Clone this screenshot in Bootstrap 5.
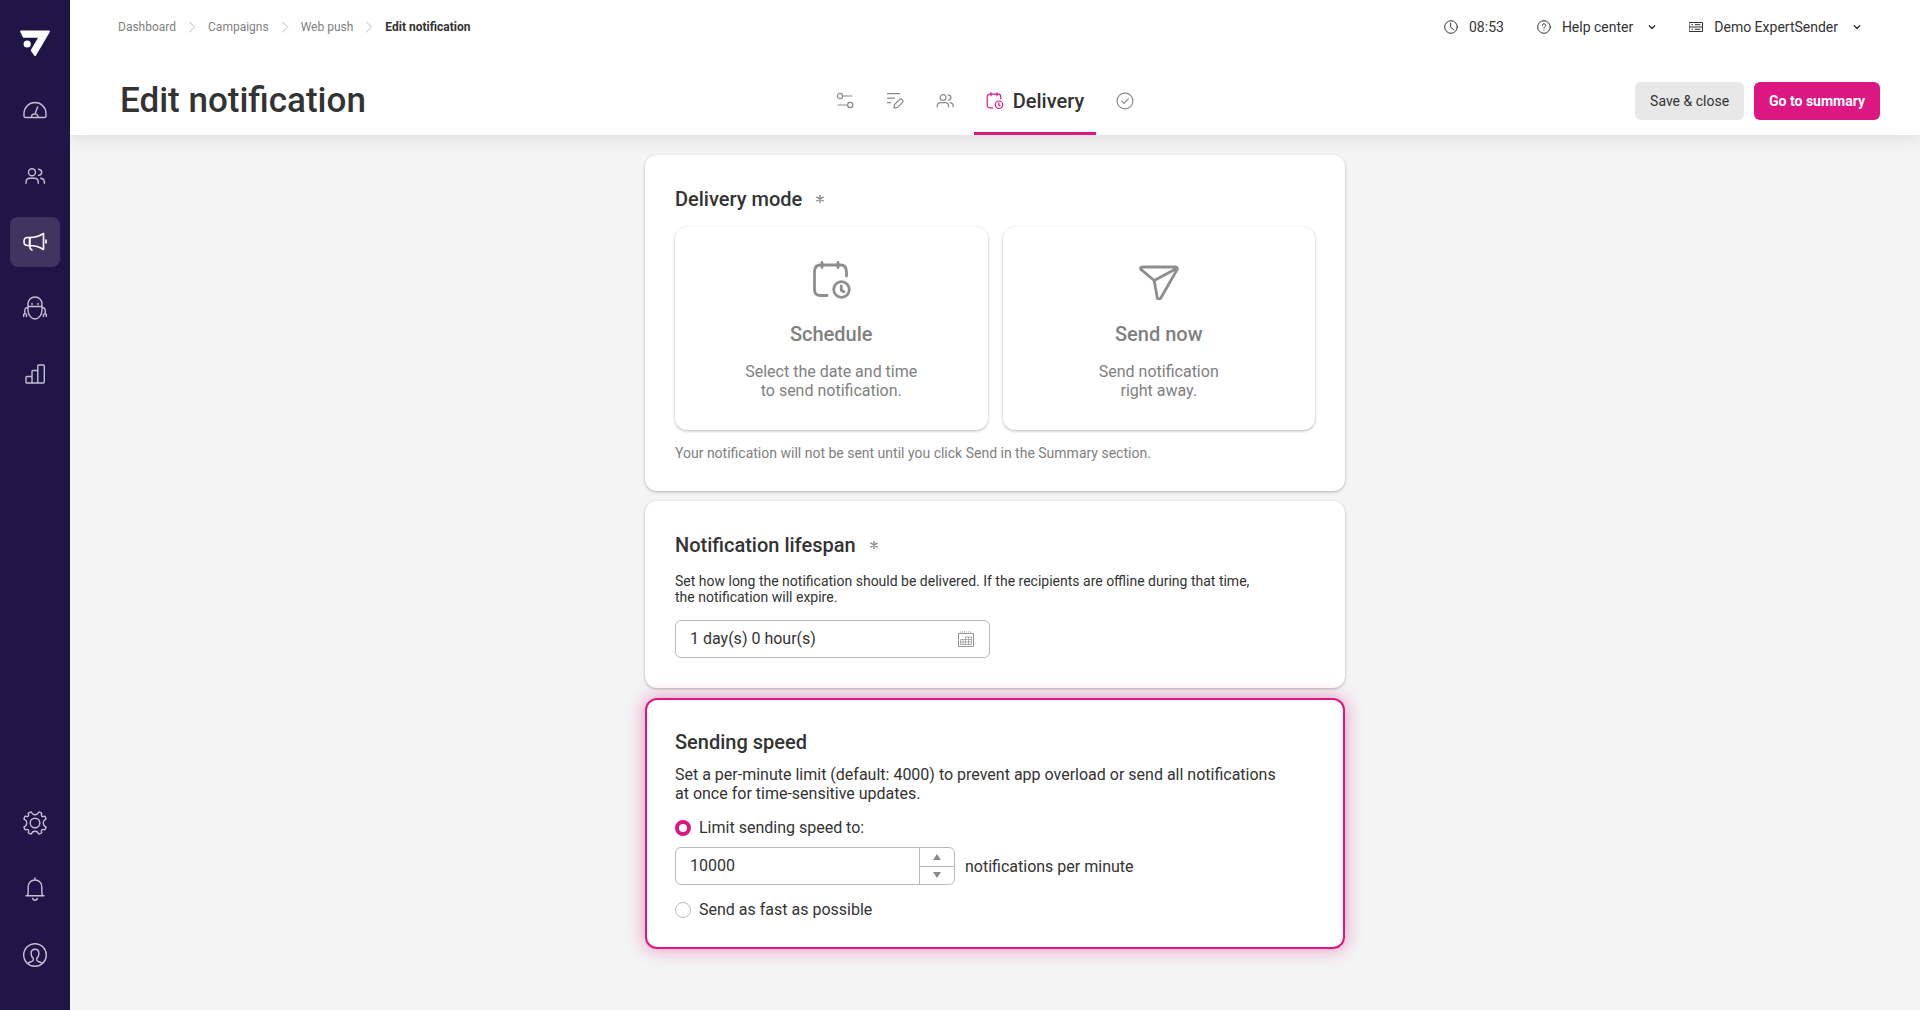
<!DOCTYPE html>
<html lang="en">
<head>
<meta charset="utf-8">
<meta name="viewport" content="width=device-width, initial-scale=1">
<title>Edit notification</title>
<link href="https://cdn.jsdelivr.net/npm/bootstrap@5.3.0/dist/css/bootstrap.min.css" rel="stylesheet">
<style>
  :root { --ink: #333; --soft: #808080; --pink: #dc1782; --navy: #201547; }
  body { font-family: Roboto, "Liberation Sans", sans-serif; font-size: 16px; line-height: 19px; color: var(--ink); background: #f4f4f4; }
  svg { display: block; flex: none; fill: none; stroke: currentColor; stroke-linecap: round; stroke-linejoin: round; }

  .side-rail { width: 70px; background: var(--navy); padding: 30px 10px; position: sticky; top: 0; }
  .side-rail .brand { margin: 0 10px 28px; }
  .brand svg { fill: #fff; stroke: none; }
  .rail-link { width: 50px; height: 50px; border-radius: 8px; color: #c4c0d4; stroke-width: 1.4; }
  .rail-link.active { background: #3f3560; color: #fff; stroke-width: 1.6; }
  .rail-list { gap: 16px; }

  .page-head { background: #fff; box-shadow: 0 0 20px rgba(0,0,0,.12); }
  .top-line { padding: 17px 59px 0 48px; }
  .crumbs { font-size: 12px; line-height: 20px; gap: 13px; }
  .crumbs a { color: var(--soft); text-decoration: none; }
  .crumbs svg { stroke: #bbb; }
  .tools { gap: 33px; }
  .tools .btn, .tools .clock { font-size: 14px; line-height: 20px; padding: 0; border: 0; color: var(--ink); gap: 11px; }
  .tools .chev { margin-left: 4px; stroke-width: 1.4; }
  .head-row { display: grid; grid-template-columns: 1fr auto 1fr; padding: 30px 40px 0 50px; height: 98px; }
  .page-title { font-size: 35px; line-height: 40px; font-weight: 500; margin: 0; }
  .steps { margin-right: 30px; gap: 8px; }
  .steps a { padding: 0 12px; color: #8a8a8a; stroke-width: 1.2; text-decoration: none; border: 0 solid transparent; border-width: 3px 0; gap: 9px; }
  .steps a.active { border-bottom-color: var(--pink); color: var(--pink); }
  .steps .step-name { color: var(--ink); font-size: 20px; line-height: 28px; font-weight: 500; }
  .actions { gap: 10px; }
  .act { font-size: 14px; line-height: 20px; padding: 9px 15px; border: 0; border-radius: 6px; }
  .act-plain { background: #e8e8e8; color: var(--ink); }
  .act-main { background: var(--pink); color: #fff; font-weight: 700; }

  .form-col { width: 100%; max-width: 700px; margin: 20px auto; gap: 10px; }
  .panel { background: #fff; border-radius: 12px; padding: 30px; box-shadow: 0 1px 3px rgba(0,0,0,.28); }
  .panel.focused { border: 2px solid var(--pink); padding: 28px 28px 27px; box-shadow: 0 0 18px rgba(220,23,130,.45); }
  .panel h2 { font-size: 20px; line-height: 28px; font-weight: 500; margin: 0 0 14px; gap: 14px; }
  .panel.focused h2 { margin-bottom: 9px; }
  .panel p { margin-bottom: 15px; }
  .req { color: #8e8e8e; stroke-width: 1.5; }
  .mode { background: #fff; border: 0; border-radius: 12px; padding: 33px 20px 30px; color: var(--soft); box-shadow: 0 1px 3px rgba(0,0,0,.3); }
  .mode svg { color: #8e8e8e; stroke-width: 2.8; }
  .mode strong { font-size: 20px; line-height: 28px; font-weight: 500; margin: 20px 0 14px; }
  .modes { gap: 15px; margin-bottom: 15px; }
  .hint { font-size: 14px; line-height: 16px; }
  .muted { color: var(--soft); }
  .box { border: 1px solid #b8b8b8; border-radius: 6px; height: 38px; background: #fff; overflow: hidden; }
  .box .form-control { border: 0; border-radius: 0; padding: 0 0 0 14px; font-size: 16px; color: var(--ink); box-shadow: none; background: none; }
  .lifespan { width: 315px; padding-right: 15px; }
  .lifespan svg { color: #999; stroke-linecap: butt; stroke-linejoin: miter; }
  .limit { width: 280px; }
  .limit input { appearance: textfield; -moz-appearance: textfield; }
  .limit input::-webkit-inner-spin-button { display: none; }
  .limit-row { gap: 10px; margin: 9px 0 15px; }
  .spin { width: 35px; border-left: 1px solid #b8b8b8; }
  .spin button { border: 0; background: none; padding: 0; color: #8a8a8a; }
  .spin button + button { border-top: 1px solid #b8b8b8; }
  .spin svg { fill: currentColor; stroke: none; }
  .choice { gap: 8px; line-height: 20px; }
  .choice .form-check-input { width: 16px; height: 16px; margin: 0; border: 1px solid #bbb; background: #fff; }
  .choice .form-check-input:checked { border: 4px solid var(--pink); background: #fff; }
</style>
</head>
<body>
<div class="d-flex">
  <nav class="side-rail vh-100 d-flex flex-column flex-shrink-0" aria-label="Main">
    <a href="#" class="brand" aria-label="Home">
      <svg width="30" height="27" viewBox="0 0 30 27"><path d="M1 .5h28c.9 0 1.200.7.8 1.400L16 25.500c-.5.9-1.300.9-1.800 0L11.300 21.500c-.5-.9-.4-1.500 0-2.200L18 7.800H4.500c-.8 0-1.300-.3-1.700-.9L.3 2C-.1 1.200.2.5 1 .5z"/><circle cx="7.200" cy="14" r="3.600"/></svg>
    </a>
    <div class="rail-list d-flex flex-column">
      <a href="#" class="rail-link d-flex align-items-center justify-content-center" aria-label="Dashboard">
        <svg width="24" height="24" viewBox="0 0 24 24"><path d="M2.500 19.500c-1 0-1.500-.5-1.500-1.500v-2.500a11 11 0 0 1 22 0V18c0 1-.5 1.500-1.500 1.500zM8.500 19.200a3.300 3.300 0 0 1 6.600 0M12 16l2.600-7"/></svg>
      </a>
      <a href="#" class="rail-link d-flex align-items-center justify-content-center" aria-label="Audience">
        <svg width="24" height="24" viewBox="0 0 24 24"><circle cx="9" cy="8.300" r="3.500"/><path d="M3 19.200v-1c0-2.600 1.700-4 4-4h4.300c2.300 0 4 1.400 4 4v1M15.500 5.200c2 .2 3.200 1.500 3.200 3.100s-1.200 2.900-3.200 3.100M17.700 14.200c2.300.4 3.700 1.800 3.700 4v1"/></svg>
      </a>
      <a href="#" class="rail-link active d-flex align-items-center justify-content-center" aria-label="Campaigns">
        <svg width="24" height="24" viewBox="0 0 24 24"><path d="M7 7.500H4.500C2.300 7.500 1 9.200 1 11.500s1.300 4 3.500 4H7M7 7.500c5 0 9.500-1.400 13.500-4v16c-4-2.600-8.500-4-13.500-4zM6.500 7.500v8c0 1.800.8 3.500 2.500 4.600M23 10v3"/></svg>
      </a>
      <a href="#" class="rail-link d-flex align-items-center justify-content-center" aria-label="Automation">
        <svg width="24" height="24" viewBox="0 0 24 24"><path d="M5 10.500V7.800C5 3.800 8 1 12 1s7 2.800 7 6.800v2.700zM5 10.500v3.500c0 4.500 3 9 7 9s7-4.500 7-9v-3.500M5 11.500c-2 0-3.200 1.200-3.200 3.200v2.300M19 11.500c2 0 3.200 1.200 3.200 3.200v2.300M.7 20.500v-2l1.100-1.300L3.500 18.500v2M23.300 20.500v-2l-1.100-1.300-1.700 1.300v2M9 7.500v1M15 7.500v1"/></svg>
      </a>
      <a href="#" class="rail-link d-flex align-items-center justify-content-center" aria-label="Reports">
        <svg width="24" height="24" viewBox="0 0 24 24"><path d="M3 20.500v-5c0-.6.400-1 1-1h5v6.500H4c-.6 0-1-.2-1-.5zM9 21V9.500c0-.6.400-1 1-1h4.800V21zM14.800 21V4c0-.6.400-1 1-1h4.500c.6 0 1 .4 1 1v16c0 .6-.4 1-1 1z"/></svg>
      </a>
    </div>
    <div class="rail-list d-flex flex-column mt-auto">
      <a href="#" class="rail-link d-flex align-items-center justify-content-center" aria-label="Settings">
        <svg width="24" height="24" viewBox="0 0 24 24"><circle cx="12" cy="12" r="4.800"/><path d="M9.300 2.700 8.700 1.500C8.500 1 8 .9 7.400 1.100L5.800 1.800c-.6.300-.7.800-.4 1.400.7 1.500-.7 3-2.200 2.200-.6-.3-1.100-.2-1.400.4l-.7 1.600c-.2.600 0 1.100.7 1.300 2.600 1 2.600 5.600 0 6.600-.7.200-.9.700-.7 1.300l.7 1.600c.3.600.8.700 1.400.4 1.500-.8 2.900.7 2.200 2.200-.3.600-.2 1.100.4 1.400l1.600.7c.6.200 1.100 0 1.300-.7 1-2.600 5.600-2.600 6.600 0 .2.700.7.900 1.300.7l1.600-.7c.6-.3.700-.8.400-1.400-.7-1.500.7-3 2.200-2.200.6.300 1.100.2 1.400-.4l.7-1.600c.2-.6 0-1.100-.7-1.300-2.600-1-2.600-5.600 0-6.600.7-.2.900-.7.700-1.300l-.7-1.600c-.3-.6-.8-.7-1.400-.4-1.500.8-2.900-.7-2.200-2.200.3-.6.200-1.100-.4-1.400l-1.600-.7c-.6-.2-1.100 0-1.300.7-1 2.400-4.800 2.600-6 .9z"/></svg>
      </a>
      <a href="#" class="rail-link d-flex align-items-center justify-content-center" aria-label="Alerts">
        <svg width="24" height="24" viewBox="0 0 24 24"><path d="M3 18.700h18M4.500 18.700c.5-1 .7-3 .7-5.700v-3C5.200 6 8 3 12 3s6.800 3 6.800 7v3c0 2.700.2 4.700.7 5.700M12 3V1M9.700 21.500c.3 1.200 1.200 1.700 2.300 1.700s2-.5 2.300-1.700"/></svg>
      </a>
      <a href="#" class="rail-link d-flex align-items-center justify-content-center" aria-label="Profile">
        <svg width="24" height="24" viewBox="0 0 24 24"><circle cx="12" cy="12" r="11.300"/><path d="M4.500 20.300c1-.9 2.700-1.300 4.500-1.900.9-.3 1.300-.9 1.300-1.800v-1.300c-1.200-.9-2.200-2.500-2.200-4.700 0-2.700 1.500-4.300 3.900-4.300s3.900 1.600 3.900 4.300c0 2.200-1 3.800-2.200 4.700v1.300c0 .9.400 1.500 1.300 1.800 1.800.6 3.500 1 4.500 1.900"/></svg>
      </a>
    </div>
  </nav>

  <div class="flex-grow-1">
    <header class="page-head">
      <div class="top-line d-flex justify-content-between">
        <nav class="crumbs d-flex align-items-center" aria-label="Breadcrumb">
          <a href="#">Dashboard</a>
          <svg width="6" height="12" viewBox="0 0 6 12"><path d="M.5 1 5.500 6l-5 5"/></svg>
          <a href="#">Campaigns</a>
          <svg width="6" height="12" viewBox="0 0 6 12"><path d="M.5 1 5.500 6l-5 5"/></svg>
          <a href="#">Web push</a>
          <svg width="6" height="12" viewBox="0 0 6 12"><path d="M.5 1 5.500 6l-5 5"/></svg>
          <span class="fw-bold" aria-current="page">Edit notification</span>
        </nav>
        <div class="tools d-flex align-items-center">
          <span class="clock d-flex align-items-center">
            <svg width="14" height="14" viewBox="0 0 14 14"><circle cx="7" cy="7" r="6.300"/><path d="M6.700 3v4.300l3 2.500"/></svg>08:53
          </span>
          <button type="button" class="btn d-flex align-items-center">
            <svg width="14" height="14" viewBox="0 0 14 14"><circle cx="7" cy="7" r="6.300"/><path d="M5.300 5.500c0-1 .7-1.600 1.700-1.600s1.700.6 1.700 1.500c0 1.200-1.700 1.200-1.700 2.600M7 10v.2"/></svg>Help center
            <svg class="chev" width="8" height="8" viewBox="0 0 8 8"><path d="m1.300 2.700 2.700 2.700 2.700-2.700"/></svg>
          </button>
          <button type="button" class="btn d-flex align-items-center">
            <svg width="14" height="14" viewBox="0 0 14 14"><path d="M.5 2.500h13v9H.5zM.5 7h13M3 4.700h.7M6.300 4.700H11M3 9.300h.7M6.300 9.300H11"/></svg>Demo ExpertSender
            <svg class="chev" width="8" height="8" viewBox="0 0 8 8"><path d="m1.300 2.700 2.700 2.700 2.700-2.700"/></svg>
          </button>
        </div>
      </div>
      <div class="head-row">
        <h1 class="page-title align-self-center">Edit notification</h1>
        <nav class="steps d-flex" aria-label="Steps">
          <a href="#" class="d-flex align-items-center" aria-label="Settings"><svg width="18" height="18" viewBox="0 0 18 18"><circle cx="4" cy="4" r="2.600"/><path d="M6.800 4H16M2 13h9.500"/><circle cx="14.200" cy="13" r="2.600"/></svg></a>
          <a href="#" class="d-flex align-items-center" aria-label="Content"><svg width="18" height="18" viewBox="0 0 18 18"><path d="M1.500 1.700h12M1.500 6.200h7M1.500 10.700h3M8.500 12.500l4.700-4.700c1-1 2.200-1 3.100-.2s.9 2.100 0 3.100l-4.600 4.700-3.700.7z"/></svg></a>
          <a href="#" class="d-flex align-items-center" aria-label="Recipients"><svg width="18" height="18" viewBox="0 0 18 18"><circle cx="7" cy="5.600" r="2.900"/><path d="M1.200 15v-1c0-2.200 1.500-3.400 3.400-3.400h4.600c1.900 0 3.400 1.200 3.400 3.400v1M12.300 3.200c1.600.1 2.700 1.100 2.700 2.400s-1 2.300-2.500 2.500M14.200 10.700c1.800.3 3 1.500 3 3.300v1"/></svg></a>
          <a href="#" class="active d-flex align-items-center" aria-current="step"><svg width="18" height="18" viewBox="0 0 18 18"><path d="M6.500 15.800H4c-1.700 0-2.800-1-2.800-2.800V5c0-1.700 1.100-2.800 2.800-2.800h8c1.700 0 2.800 1.100 2.800 2.800v2M5 .8v3M11 .8v3"/><circle cx="13" cy="12.700" r="3.700"/><path d="M12.800 10.900v2l1.300.8"/></svg><span class="step-name">Delivery</span></a>
          <a href="#" class="d-flex align-items-center" aria-label="Summary"><svg width="18" height="18" viewBox="0 0 18 18"><circle cx="9" cy="9" r="7.900"/><path d="m5.800 9.200 2.200 2.200 4.300-4.600"/></svg></a>
        </nav>
        <div class="actions d-flex align-items-center justify-content-end">
          <button type="button" class="btn act act-plain">Save &amp; close</button>
          <button type="button" class="btn act act-main">Go to summary</button>
        </div>
      </div>
    </header>

    <main class="form-col d-flex flex-column">
      <section class="panel">
        <h2 class="d-flex align-items-center">Delivery mode <svg class="req" width="8" height="8" viewBox="0 0 8 8" role="img" aria-label="required"><path d="M4 .3v7.400M.8 2.200l6.400 3.600M7.200 2.200.8 5.800"/></svg></h2>
        <div class="modes d-flex">
          <button type="button" class="mode flex-fill w-50 d-flex flex-column align-items-center">
            <svg width="40" height="40" viewBox="0 0 40 40"><path d="M16 35.500H9.500C5.500 35.500 3.500 33.500 3.500 29.500V12C3.500 7.500 5.500 5 9.500 5h20c4 0 6 2.500 6 7v4M11 2.500v5M27 2.500v5"/><circle cx="30.500" cy="29.500" r="7.800"/><path d="M30.300 26v4.200l2.600 1.600"/></svg>
            <strong>Schedule</strong>
            <span>Select the date and time<br>to send notification.</span>
          </button>
          <button type="button" class="mode flex-fill w-50 d-flex flex-column align-items-center">
            <svg width="40" height="40" viewBox="0 0 40 40"><path d="M3.300 7h33c2 0 2.600 1.300 1.700 2.800L21.800 38c-1.200 2-3.200 1.700-3.600-.5l-3-17L2.200 9.700C.9 8.500 1.600 7 3.300 7zM15.200 20.500 37.500 8.500"/></svg>
            <strong>Send now</strong>
            <span>Send notification<br>right away.</span>
          </button>
        </div>
        <p class="hint muted mb-0">Your notification will not be sent until you click Send in the Summary section.</p>
      </section>

      <section class="panel">
        <h2 class="d-flex align-items-center"><label for="life">Notification lifespan</label> <svg class="req" width="8" height="8" viewBox="0 0 8 8" role="img" aria-label="required"><path d="M4 .3v7.400M.8 2.200l6.400 3.600M7.200 2.200.8 5.800"/></svg></h2>
        <p class="hint">Set how long the notification should be delivered. If the recipients are offline during that time,<br>the notification will expire.</p>
        <div class="box lifespan d-flex align-items-center">
          <input id="life" type="text" class="form-control" value="1 day(s) 0 hour(s)">
          <svg width="16" height="16" viewBox="0 0 16 16"><path d="M.5 2.500h15v13H.5z"/><path stroke-dasharray="1 1" d="M2 1h12"/><path stroke-width=".8" d="M2.500 8.500h11M2.500 11h11M2.500 13.500h11M2.500 8.500v5M5 8.500v5M7.500 6v7.500M10.500 6v7.500M13.500 6v7.500M7.500 6h6"/></svg>
        </div>
      </section>

      <section class="panel focused">
        <h2>Sending speed</h2>
        <p>Set a per-minute limit (default: 4000) to prevent app overload or send all notifications<br>at once for time-sensitive updates.</p>
        <div class="choice d-flex align-items-center">
          <input class="form-check-input" type="radio" name="speed" id="limited" checked>
          <label for="limited">Limit sending speed to:</label>
        </div>
        <div class="limit-row d-flex align-items-center">
          <div class="box limit d-flex">
            <input id="rate" type="number" class="form-control" value="10000">
            <div class="spin d-flex flex-column flex-shrink-0">
              <button type="button" class="flex-fill d-flex align-items-center justify-content-center" aria-label="Increase"><svg width="8" height="6" viewBox="0 0 8 6"><path d="M4 0l4 6H0z"/></svg></button>
              <button type="button" class="flex-fill d-flex align-items-center justify-content-center" aria-label="Decrease"><svg width="8" height="6" viewBox="0 0 8 6"><path d="M0 0h8L4 6z"/></svg></button>
            </div>
          </div>
          <label for="rate">notifications per minute</label>
        </div>
        <div class="choice d-flex align-items-center">
          <input class="form-check-input" type="radio" name="speed" id="fastest">
          <label for="fastest">Send as fast as possible</label>
        </div>
      </section>
    </main>
  </div>
</div>
<script src="https://cdn.jsdelivr.net/npm/bootstrap@5.3.0/dist/js/bootstrap.bundle.min.js"></script>
</body>
</html>
